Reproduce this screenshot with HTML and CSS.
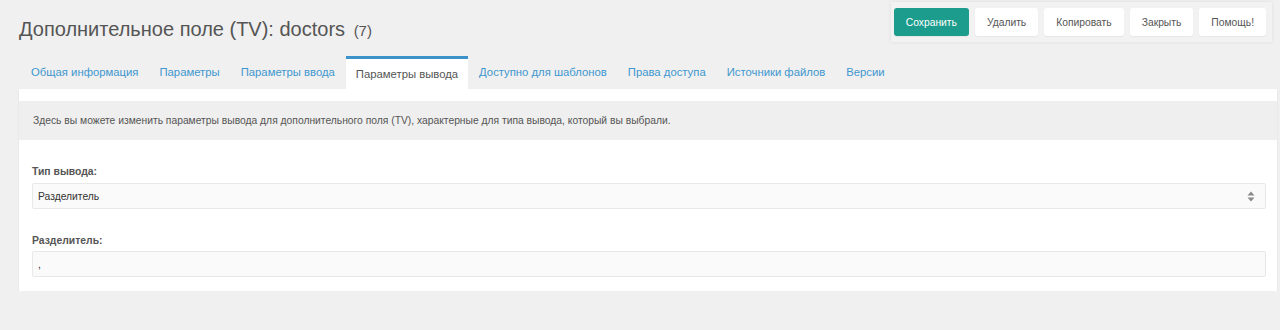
FILE: index.html
```html
<!DOCTYPE html>
<html lang="ru">
<head>
    <meta charset="UTF-8">
    <title>Дополнительное поле (TV): doctors</title>
    <link rel="stylesheet" href="styles.css">
</head>
<body>
    <div class="header">
        <h1 class="title">Дополнительное поле (TV): doctors <span class="count">(7)</span></h1>
        <div class="actions">
            <button class="btn btn-primary">Сохранить</button>
            <button class="btn">Удалить</button>
            <button class="btn">Копировать</button>
            <button class="btn">Закрыть</button>
            <button class="btn">Помощь!</button>
        </div>
    </div>

    <ul class="tabs">
        <li>Общая информация</li>
        <li>Параметры</li>
        <li>Параметры ввода</li>
        <li class="active">Параметры вывода</li>
        <li>Доступно для шаблонов</li>
        <li>Права доступа</li>
        <li>Источники файлов</li>
        <li>Версии</li>
    </ul>

    <div class="panel">
        <div class="desc">Здесь вы можете изменить параметры вывода для дополнительного поля (TV), характерные для типа вывода, который вы выбрали.</div>
        <div class="form">
            <label class="label">Тип вывода:</label>
            <div class="field select">
                <span>Разделитель</span>
                <svg width="8" height="11" viewBox="0 0 8 11"><path d="M4 0.5 L7.5 4.5 L0.5 4.5 Z M4 10.5 L7.5 6.5 L0.5 6.5 Z" fill="#8a8a8a"/></svg>
            </div>
            <label class="label second">Разделитель:</label>
            <div class="field">,</div>
        </div>
    </div>
</body>
</html>
```

FILE: styles.css
```css
body {
    margin: 0;
    background: #f0f0f0;
    font-family: "Liberation Sans", Arial, sans-serif;
    color: #555;
}
.header {
    display: flex;
    justify-content: space-between;
    align-items: flex-start;
    padding: 0 8px 0 19px;
}
.title {
    margin: 15px 0 0;
    font-size: 20px;
    font-weight: normal;
    line-height: 28px;
    color: #555;
}
.count {
    margin-left: 3px;
    font-size: 15px;
}
.actions {
    display: flex;
    gap: 6px;
    margin-top: 2px;
    padding: 6px 6px 6px 3px;
    background: #f2f2f2;
    box-shadow: 0 0 4px rgba(0, 0, 0, 0.08);
}
.btn {
    height: 28px;
    padding: 0 12px;
    border: none;
    border-radius: 3px;
    background: #fff;
    color: #555;
    font-family: "Liberation Sans", Arial, sans-serif;
    font-size: 10.3px;
    box-shadow: 0 1px 1px rgba(0, 0, 0, 0.05);
}
.btn-primary {
    background: #1b9c8c;
    color: #fff;
}
.tabs {
    display: flex;
    margin: 11px 0 0 21px;
    padding: 0;
    list-style: none;
}
.tabs li {
    height: 33px;
    line-height: 33px;
    padding: 0 10px;
    margin-right: 1px;
    font-size: 11.3px;
    color: #3f97cf;
}
.tabs li.active {
    height: 30px;
    line-height: 31px;
    border-top: 3px solid #3b93c9;
    background: #fff;
    color: #555;
}
.panel {
    margin: 0 3px 0 19px;
    padding: 12px 0 14px;
    background: #fff;
    box-shadow: 0 1px 2px rgba(0, 0, 0, 0.08);
}
.desc {
    height: 39px;
    line-height: 39px;
    padding: 0 14px;
    background: #efefef;
    font-size: 10.3px;
    color: #555;
}
.form {
    padding: 25px 11px 0 13px;
}
.label {
    display: block;
    height: 14px;
    line-height: 14px;
    margin-bottom: 4px;
    font-size: 10.4px;
    font-weight: bold;
    color: #555;
}
.label.second {
    margin-top: 25px;
    margin-bottom: 3px;
}
.field {
    display: flex;
    align-items: center;
    justify-content: space-between;
    box-sizing: border-box;
    height: 26px;
    padding: 0 10px 0 5px;
    border: 1px solid #e8e8e8;
    border-radius: 2px;
    background: #fafafa;
    font-size: 10.3px;
    color: #333;
}
```
